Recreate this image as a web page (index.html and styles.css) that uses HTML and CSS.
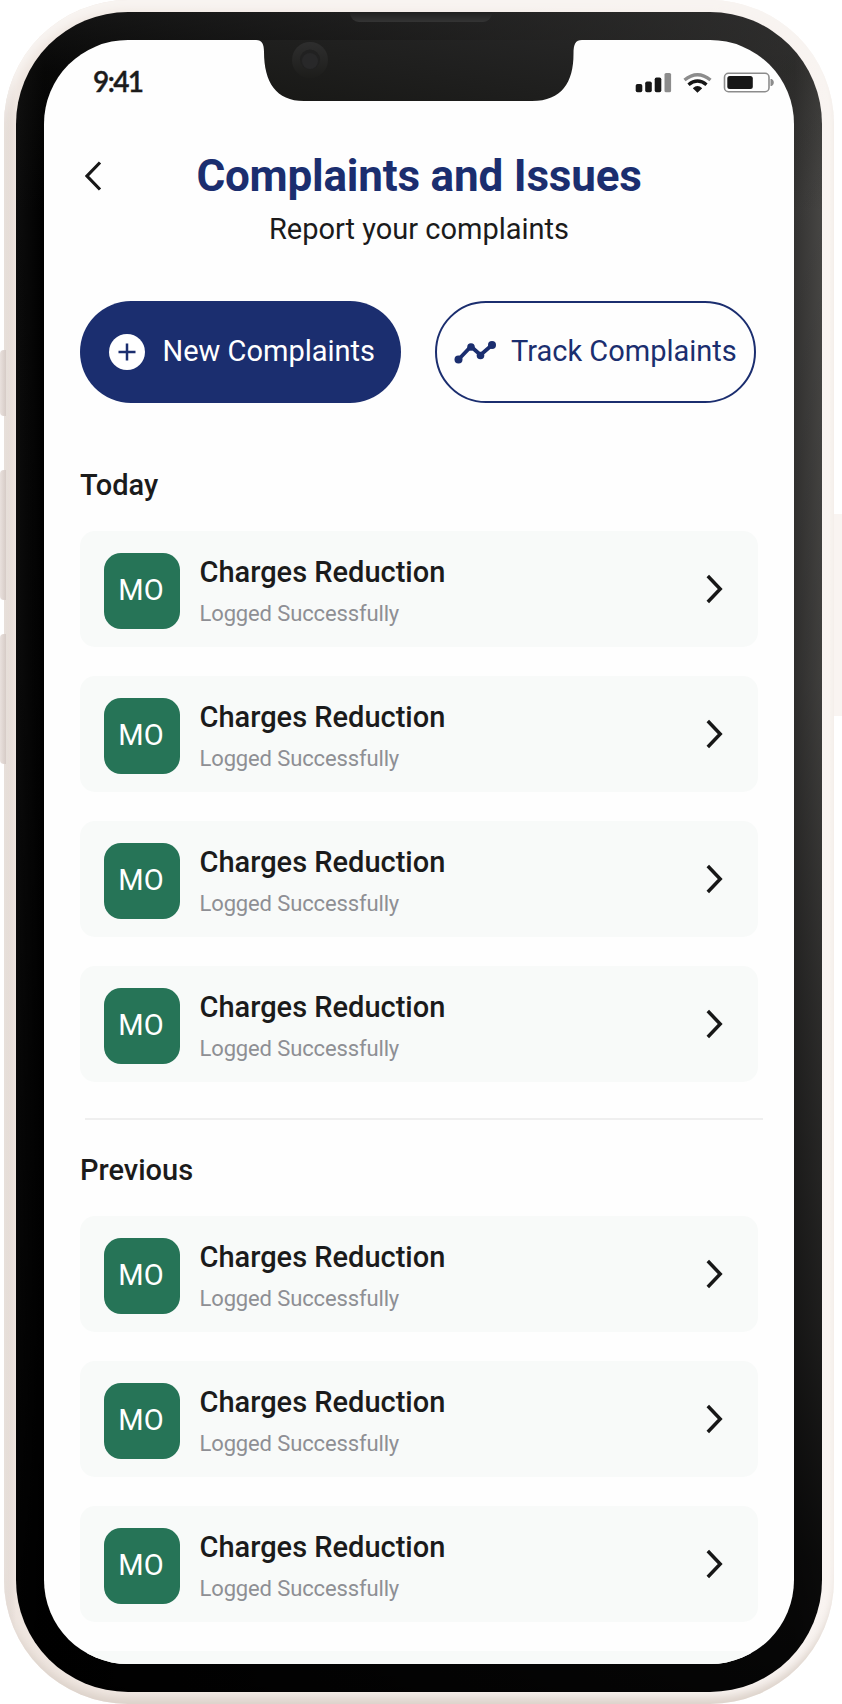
FILE: index.html
```
<!DOCTYPE html>
<html lang="en">
<head>
<meta charset="utf-8">
<title>Complaints and Issues</title>
<link rel="stylesheet" href="styles.css">
</head>
<body>
<svg width="0" height="0" class="defs">
  <symbol id="chevron" viewBox="0 0 18 32"><path d="M2.800 3 15.200 16 2.800 29" fill="none" stroke="#171717" stroke-width="3.5"/></symbol>
</svg>
<div class="phone">
  <span class="key key-mute"></span><span class="key key-up"></span><span class="key key-down"></span><span class="key key-power"></span>
  <div class="frame">
    <div class="bezel">
      <span class="speaker"></span>
      <div class="screen">
        <svg class="notch" width="330" height="61" viewBox="0 0 330 61">
          <defs>
            <linearGradient id="ng" x1="0" y1="1" x2="1" y2="0"><stop offset="0" stop-color="#181816"/><stop offset="1" stop-color="#252525"/></linearGradient>
            <linearGradient id="cam" x1="0" y1="0" x2="0" y2="1"><stop offset="0" stop-color="#2e2e2e"/><stop offset="1" stop-color="#1d1d1b"/></linearGradient>
          </defs>
          <path d="M2 0C8 0 10 4 10 12C10 42 22 61 50 61H278C308 61 319.500 42 319.500 14C319.500 4 321.500 0 328 0Z" fill="url(#ng)"/>
          <circle cx="56" cy="20" r="18" fill="url(#cam)"/><circle cx="56" cy="19.500" r="10" fill="#212121"/><circle cx="56" cy="21" r="8" fill="#282829"/>
        </svg>
        <div class="status">
          <span class="time">9:41</span>
          <svg class="indicators" width="142" height="24" viewBox="634 70 142 24">
            <g fill="#171717"><rect x="635.700" y="84" width="6.600" height="8.3" rx="1.8"/><rect x="645.200" y="81.5" width="6.600" height="10.8" rx="1.8"/><rect x="654.700" y="77.5" width="6.600" height="14.8" rx="1.8"/></g>
            <rect x="664.500" y="73" width="6.600" height="19.3" rx="1.6" fill="#8c8c8c"/>
            <path d="M684.5 80Q697.500 69.500 710.500 80" fill="none" stroke="#8c8c8c" stroke-width="3.4"/>
            <path d="M688.500 84.800Q697.500 77.300 706.500 84.800" fill="none" stroke="#171717" stroke-width="3.4"/>
            <path d="M692.800 88.300Q697.500 83.800 702.200 88.300L697.500 92.800Z" fill="#171717"/>
            <rect x="724.500" y="73.300" width="44.500" height="18.400" rx="4" fill="none" stroke="#8c8c8c" stroke-width="1.6"/>
            <rect x="727.300" y="76" width="25.500" height="13" rx="2.500" fill="#171717"/>
            <path d="M770.500 79H771.700C774.500 80.500 774.500 84.500 771.700 86H770.500Z" fill="#8c8c8c"/>
          </svg>
        </div>
        <header class="header">
          <svg class="back" width="18" height="30" viewBox="0 0 18 30"><path d="M16 1.500 3 15 16 28.500" fill="none" stroke="#171717" stroke-width="3.200"/></svg>
          <h1 class="title">Complaints and Issues</h1>
          <p class="subtitle">Report your complaints</p>
        </header>
        <div class="actions">
          <button class="btn btn-solid">
            <svg width="36" height="36" viewBox="0 0 36 36"><circle cx="18" cy="18" r="18" fill="#fff"/><path d="M18 9.500V26.500M9.500 18H26.500" stroke="#1b2e6f" stroke-width="2.500"/></svg>
            <span class="label">New Complaints</span>
          </button>
          <button class="btn btn-line">
            <svg width="42" height="24" viewBox="0 0 42 24"><g fill="#1b2e6f"><path d="M4.500 19.500 17 6.500 26.500 15 38 5" fill="none" stroke="#1b2e6f" stroke-width="3.800"/><circle cx="4.500" cy="19.500" r="4"/><circle cx="17" cy="7" r="3.800"/><circle cx="26.500" cy="15.500" r="3.800"/><circle cx="38" cy="5" r="4"/></g></svg>
            <span class="label">Track Complaints</span>
          </button>
        </div>
        <h2 class="section">Today</h2>
        <div class="list">
          <div class="card"><span class="avatar">MO</span><div class="info"><b class="name">Charges Reduction</b><span class="state">Logged Successfully</span></div><svg class="go"><use href="#chevron"/></svg></div>
          <div class="card"><span class="avatar">MO</span><div class="info"><b class="name">Charges Reduction</b><span class="state">Logged Successfully</span></div><svg class="go"><use href="#chevron"/></svg></div>
          <div class="card"><span class="avatar">MO</span><div class="info"><b class="name">Charges Reduction</b><span class="state">Logged Successfully</span></div><svg class="go"><use href="#chevron"/></svg></div>
          <div class="card"><span class="avatar">MO</span><div class="info"><b class="name">Charges Reduction</b><span class="state">Logged Successfully</span></div><svg class="go"><use href="#chevron"/></svg></div>
        </div>
        <hr class="rule">
        <h2 class="section section-prev">Previous</h2>
        <div class="list">
          <div class="card"><span class="avatar">MO</span><div class="info"><b class="name">Charges Reduction</b><span class="state">Logged Successfully</span></div><svg class="go"><use href="#chevron"/></svg></div>
          <div class="card"><span class="avatar">MO</span><div class="info"><b class="name">Charges Reduction</b><span class="state">Logged Successfully</span></div><svg class="go"><use href="#chevron"/></svg></div>
          <div class="card"><span class="avatar">MO</span><div class="info"><b class="name">Charges Reduction</b><span class="state">Logged Successfully</span></div><svg class="go"><use href="#chevron"/></svg></div>
          <div class="card card-cut"></div>
        </div>
      </div>
    </div>
  </div>
</div>
</body>
</html>
```
FILE: styles.css
```
* { box-sizing: border-box; }
body { margin: 0; background: #fff; font-family: Roboto, sans-serif; color: #1b1b1b; }
.defs { position: absolute; }
h1, h2, p { margin: 0; }
.phone { position: relative; width: 842px; height: 1704px; padding-left: 4px; overflow: hidden; }
.frame { width: 830px; height: 1704px; padding: 12px; border-radius: 124px;
  background: linear-gradient(90deg, #ddd3ce 0, #efe6e0 12px, #f4ece8 50%, #f9f4f1 100%);
  box-shadow: inset 0 -10px 8px -4px #dcd2ca, inset 0 10px 8px #f8f4f1; }
.bezel { position: relative; width: 806px; height: 1680px; padding: 28px; border-radius: 112px;
  background:
    linear-gradient(180deg, rgba(38,38,38,.5) 0, rgba(24,24,22,.3) 60px, transparent 200px),
    linear-gradient(180deg, transparent 0, rgba(0,0,0,.15) 40%, rgba(0,0,0,.4) 60%, rgba(0,0,0,.6) 78%, rgba(0,0,0,.85) 92%, rgba(0,0,0,.9)),
    linear-gradient(90deg, #0d0d0d 0, #000 28px, #363534 778px, #4a4947 100%); }
.key { position: absolute; left: 0; width: 6px; background: linear-gradient(90deg, #e9e1dd, #d6cbc6); border-radius: 4px 0 0 4px; }
.key-mute { top: 350px; height: 66px; }
.key-up { top: 470px; height: 130px; }
.key-down { top: 634px; height: 130px; }
.key-power { top: 514px; left: 834px; width: 9px; height: 202px; background: #f9f4f1; border-radius: 0; }
.speaker { position: absolute; left: 334px; top: 0; width: 142px; height: 10px; border-radius: 0 0 9px 9px; background: linear-gradient(#202020, #343434); }
.screen { position: relative; width: 750px; height: 1624px; padding: 0 36px; border-radius: 84px; background: #fefefe; overflow: hidden; }
.notch { position: absolute; left: 210px; top: 0; }
.status { display: flex; justify-content: space-between; height: 103px; padding: 24px 0 0 13px; margin-right: -18px; }
.time { margin-top: -1px; font: 600 28px/36px Lato, sans-serif; letter-spacing: -1.6px; -webkit-text-stroke: .4px #1b1b1b; }
.indicators { margin: 6px 0 0; }
.header { position: relative; height: 158px; text-align: center; }
.back { position: absolute; left: 4px; top: 18px; }
.title { font-size: 44px; line-height: 66px; font-weight: 700; letter-spacing: -.2px; color: #1b2e6f; }
.subtitle { font-size: 29px; line-height: 41px; }
.actions { display: flex; gap: 34px; }
.btn { display: flex; align-items: center; width: 321px; height: 101.5px; border-radius: 51px; font: 29px/42px Roboto, sans-serif; white-space: nowrap; }
.btn-solid { padding: 0 0 0 28.5px; border: 0; gap: 18px; background: #1b2e6f; color: #fff; }
.btn-line { padding: 0 0 0 17px; border: 2px solid #1b2e6f; gap: 15px; background: transparent; color: #1b2e6f; }
.label { padding-bottom: 2px; }
.section { margin: 61.5px 0 25px; font-size: 29px; line-height: 42px; font-weight: 500; }
.list { display: flex; flex-direction: column; gap: 29px; width: 678px; }
.card { display: flex; align-items: center; height: 116px; padding: 3px 35px 0 23.5px; border-radius: 15px; background: #f8faf9; }
.avatar { display: flex; align-items: center; justify-content: center; width: 76px; height: 76px; padding: 0 1px 1px 0; border-radius: 17px; background: #267457; color: #fff; font-size: 29px; }
.info { display: flex; flex: 1; flex-direction: column; margin-left: 20px; padding-top: 5px; }
.name { font-size: 29px; line-height: 42px; font-weight: 500; }
.state { font-size: 22px; line-height: 42px; letter-spacing: -.13px; color: #8e8f94; }
.go { width: 18px; height: 32px; margin-bottom: 3px; }
.rule { width: 678px; height: 2px; margin: 36px 0 0 5px; border: 0; background: #efefef; }
.section-prev { margin: 29px 0 25px; }
```
